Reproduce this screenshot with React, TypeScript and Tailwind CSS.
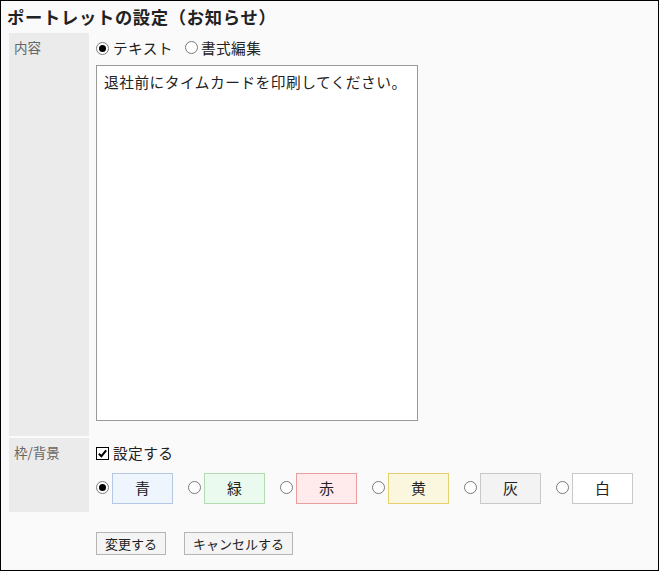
import React from "react";

const font = { fontFamily: '"Noto Sans CJK JP", "Noto Sans", sans-serif' };

function Radio({ checked }: { checked?: boolean }) {
  return (
    <span className="inline-flex h-[13px] w-[13px] shrink-0 items-center justify-center rounded-full border border-[#7a7a7a] bg-white">
      {checked && <span className="h-[7px] w-[7px] rounded-full bg-black" />}
    </span>
  );
}

const colors = [
  { label: "青", bg: "bg-[#eef5fd]", border: "border-[#b3c8e4]", checked: true },
  { label: "緑", bg: "bg-[#eafaef]", border: "border-[#b4dbb0]" },
  { label: "赤", bg: "bg-[#ffebeb]", border: "border-[#ea9e9e]" },
  { label: "黄", bg: "bg-[#fbf7df]", border: "border-[#e6cf6f]" },
  { label: "灰", bg: "bg-[#f3f3f3]", border: "border-[#c8c8c8]" },
  { label: "白", bg: "bg-white", border: "border-[#c8c8c8]" },
];

export default function App() {
  return (
    <div
      style={font}
      className="box-border h-[571px] w-[659px] border border-black bg-[#fafafa] text-[#222]"
    >
      <div className="h-[32px] px-[6px] pt-[6px] text-[17.3px] font-bold leading-[20px] tracking-[0.7px] text-[#222]">
        ポートレットの設定（お知らせ）
      </div>
      <div className="ml-[8px]">
        <div className="flex h-[403px]">
          <div className="w-[80px] shrink-0 bg-[#ebebeb] pl-[5px] pt-[5px] text-[13.5px] leading-[18px] text-[#666]">
            内容
          </div>
          <div className="pl-[7px] pt-[5px]">
            <div className="flex h-[20px] items-center text-[14.7px]">
              <Radio checked />
              <span className="ml-[4px] tracking-[0.4px]">テキスト</span>
              <span className="ml-[12px]">
                <Radio />
              </span>
              <span className="ml-[3px] tracking-[0.4px]">書式編集</span>
            </div>
            <div className="mt-[7px] box-border h-[356px] w-[322px] border border-[#999] bg-white px-[7px] pt-[6px] text-[14.7px] leading-[20px] tracking-[0.5px]">
              退社前にタイムカードを印刷してください。
            </div>
          </div>
        </div>
        <div className="mt-[2px] flex h-[74px]">
          <div className="w-[80px] shrink-0 bg-[#ebebeb] pl-[5px] pt-[5px] text-[13.5px] leading-[18px] text-[#666]">
            枠/背景
          </div>
          <div className="pl-[7px] pt-[5px]">
            <div className="flex h-[20px] items-center text-[14.7px]">
              <span className="flex h-[13px] w-[13px] items-center justify-center border border-black bg-white">
                <svg viewBox="0 0 12 12" className="h-[11px] w-[11px]">
                  <path d="M2 6.2 L4.8 9 L10 2.5" fill="none" stroke="#000" strokeWidth="2.2" />
                </svg>
              </span>
              <span className="ml-[4px] tracking-[0.4px]">設定する</span>
            </div>
            <div className="mt-[10px] flex">
              {colors.map((c) => (
                <div key={c.label} className="mr-[15px] flex items-center">
                  <span className="-mt-[2px] flex">
                    <Radio checked={c.checked} />
                  </span>
                  <div
                    className={`ml-[3px] box-border flex h-[31px] w-[61px] items-center justify-center border ${c.bg} ${c.border} text-[15px]`}
                  >
                    {c.label}
                  </div>
                </div>
              ))}
            </div>
          </div>
        </div>
        <div className="ml-[87px] mt-[20px] flex gap-[18px]">
          <button className="box-border h-[23px] border border-[#b5b5b5] bg-[#f4f4f4] px-[8px] text-[13px] leading-[20px] text-[#222]">
            変更する
          </button>
          <button className="box-border h-[23px] border border-[#b5b5b5] bg-[#f4f4f4] px-[8px] text-[13px] leading-[20px] text-[#222]">
            キャンセルする
          </button>
        </div>
      </div>
    </div>
  );
}
